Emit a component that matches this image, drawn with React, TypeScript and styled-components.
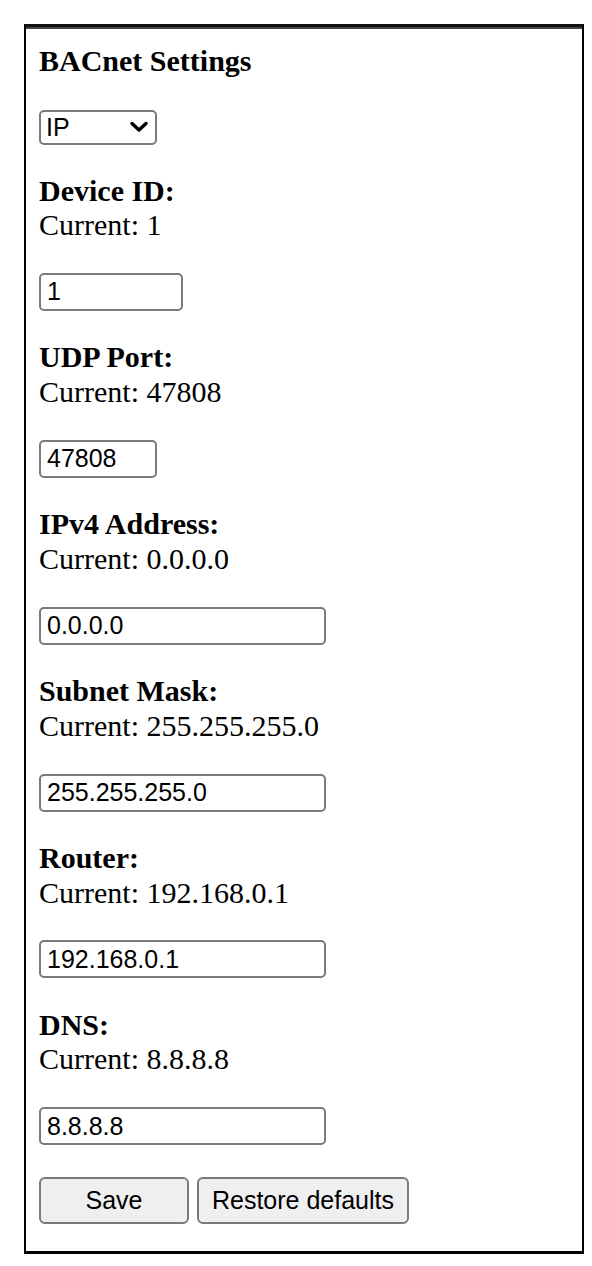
import styled, { createGlobalStyle } from "styled-components";

const GlobalStyle = createGlobalStyle`
  body {
    margin: 0;
    background: #fff;
    color: #000;
  }
`

interface Field {
    label: string
    value: string
    width: number
}

const fields: Field[] = [
    { label: 'Device ID:', value: '1', width: 144 },
    { label: 'UDP Port:', value: '47808', width: 118 },
    { label: 'IPv4 Address:', value: '0.0.0.0', width: 287 },
    { label: 'Subnet Mask:', value: '255.255.255.0', width: 287 },
    { label: 'Router:', value: '192.168.0.1', width: 287 },
    { label: 'DNS:', value: '8.8.8.8', width: 287 },
]

function Chevron() {
    return <svg width="18" height="12" viewBox="0 0 18 12">
        <polyline
            points="2,2.5 9,9 16,2.5"
            fill="none"
            stroke="#000"
            strokeWidth="3.4"
            strokeLinecap="round"
            strokeLinejoin="round"
        />
    </svg>
}

export default function App() {
    return <Page>
        <GlobalStyle />
        <SettingsBox>
            <Title>BACnet Settings</Title>
            <SelectWrap>
                <ModeSelect defaultValue="IP">
                    <option value="IP">IP</option>
                    <option value="MSTP">MS/TP</option>
                </ModeSelect>
                <ChevronSlot>
                    <Chevron />
                </ChevronSlot>
            </SelectWrap>
            {fields.map(f => (
                <Section key={f.label}>
                    <Label>{f.label}</Label>
                    <Current>Current: {f.value}</Current>
                    <TextInput $width={f.width} defaultValue={f.value} />
                </Section>
            ))}
            <Actions>
                <ActionButton $width={150}>Save</ActionButton>
                <ActionButton $width={212}>Restore defaults</ActionButton>
            </Actions>
        </SettingsBox>
    </Page>
}

const Page = styled.div`
  padding: 24px 8px 10px 24px;
`

const SettingsBox = styled.div`
  box-sizing: border-box;
  width: 560px;
  border: 2px solid #000;
  border-top: 3px solid #111;
  border-bottom-width: 3px;
  box-shadow: inset 0 2px 0 #444;
  padding: 16.5px 13px 27px 13px;
  display: flex;
  flex-direction: column;
  align-items: flex-start;
  font-family: "Liberation Serif", "Times New Roman", serif;
  font-size: 30px;
  line-height: 34.5px;
`

const Title = styled.div`
  font-weight: bold;
`

const SelectWrap = styled.div`
  position: relative;
  margin-top: 31px;
  width: 118px;
  height: 35px;
`

const ModeSelect = styled.select`
  appearance: none;
  box-sizing: border-box;
  width: 118px;
  height: 35px;
  margin: 0;
  border: 2px solid #7a7a7a;
  border-radius: 5px;
  background: #fff;
  padding: 0 0 0 5px;
  font-family: "Liberation Sans", Arial, sans-serif;
  font-size: 25px;
  color: #000;
`

const ChevronSlot = styled.span`
  position: absolute;
  right: 9px;
  top: 12px;
  display: flex;
  pointer-events: none;
`

const Section = styled.div`
  display: flex;
  flex-direction: column;
  align-items: flex-start;
  margin-top: 29.5px;
`

const Label = styled.div`
  font-weight: bold;
`

const Current = styled.div`
  font-weight: normal;
`

const TextInput = styled.input<{ $width: number }>`
  box-sizing: border-box;
  width: ${p => p.$width}px;
  height: 38px;
  margin: 30.4px 0 0;
  border: 2px solid #7a7a7a;
  border-radius: 5px;
  padding: 0 6px;
  font-family: "Liberation Sans", Arial, sans-serif;
  font-size: 25px;
  color: #000;
  outline: none;
`

const Actions = styled.div`
  display: flex;
  gap: 8px;
  margin-top: 31.5px;
`

const ActionButton = styled.button<{ $width: number }>`
  box-sizing: border-box;
  width: ${p => p.$width}px;
  height: 47px;
  border: 2px solid #7a7a7a;
  border-radius: 6px;
  background: #efefef;
  padding: 0;
  font-family: "Liberation Sans", Arial, sans-serif;
  font-size: 25px;
  color: #000;
`
